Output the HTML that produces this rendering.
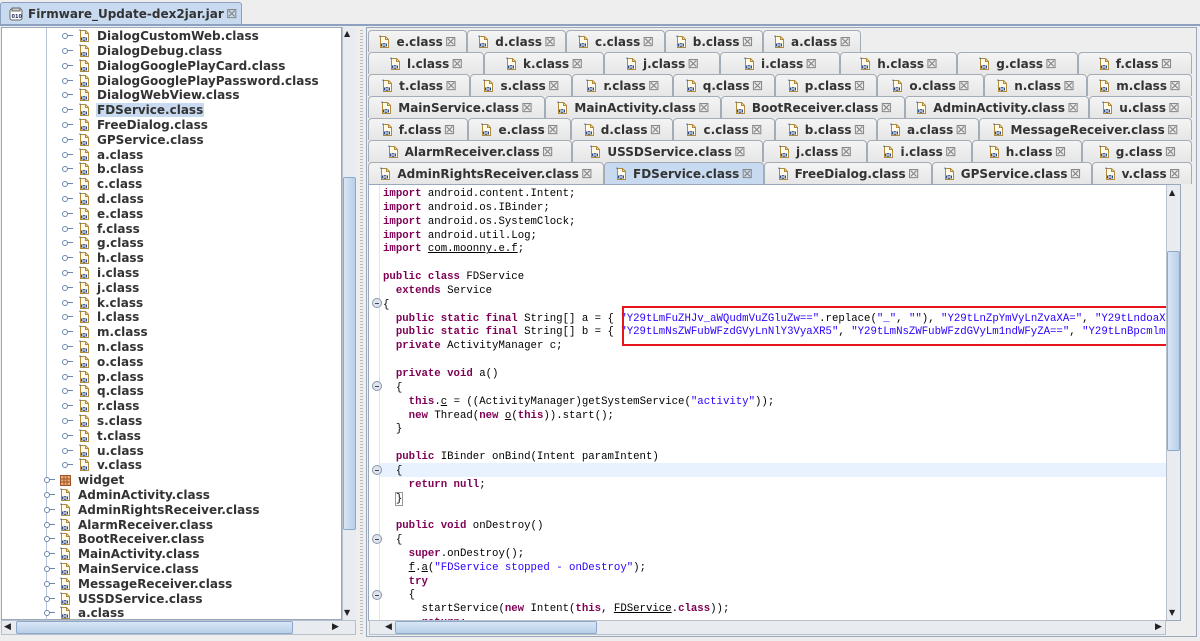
<!DOCTYPE html>
<html><head><meta charset="utf-8">
<style>
*{margin:0;padding:0;box-sizing:border-box}
body{width:1200px;height:641px;background:#eeeeee;position:relative;overflow:hidden;font-family:"DejaVu Sans","Liberation Sans",sans-serif}
.abs{position:absolute}
#toptab{left:0;top:2px;width:242px;height:23px;background:#c8daf0;border:1px solid #8da0c0;border-bottom:none;border-radius:3px 3px 0 0;font-size:12px;font-weight:bold;color:#333;display:flex;align-items:center;padding-left:8px;white-space:nowrap;overflow:hidden}
#topline{left:0;top:24px;width:1200px;height:2px;background:#8da0c0}
#tree{left:1px;top:27px;width:341px;height:593px;background:#fff;border:1px solid #9aa8bc}
.row{position:absolute;height:15px;font-size:12px;font-weight:bold;color:#333;display:flex;align-items:center;white-space:nowrap}
.row.sel span{background:#c8daf0}
.row span{padding:0 1px}
.con{position:absolute;width:10px;height:1px;background:#6b88b0}
.con:before{content:"";position:absolute;left:-1px;top:-2px;width:4px;height:4px;border:1px solid #6b88b0;border-radius:50%;background:#fff}
.ic{display:inline-block;width:13px;height:14px;margin-right:5px;vertical-align:middle}
.vs{background:#e8ebef;border-left:1px solid #b8c0cc}
.thumb{position:absolute;background:linear-gradient(90deg,#d8e6f6,#b8cfe9);border:1px solid #8ea8c8;border-radius:2px}
.t{position:absolute;height:22px;background:linear-gradient(#f4f4f4,#e6e6e6);border:1px solid #a4acb8;border-bottom:none;border-radius:4px 4px 0 0;font-size:12px;font-weight:bold;color:#333;display:flex;align-items:center;justify-content:center;white-space:nowrap}
.t.sel{background:#c8daf0}
.x{color:#888;font-weight:normal;font-size:14px;margin-left:2px;line-height:14px}
#editor{left:368px;top:184px;width:813px;height:437px;background:#fff;border:1px solid #9aa8bc}
pre{position:absolute;left:14px;top:0;font-family:"Liberation Mono","DejaVu Sans Mono",monospace;font-size:10.7px;line-height:13.85px;color:#000}
.k{color:#7f0055;font-weight:bold}
.s{color:#2a00ff}
.u{text-decoration:underline}
.fold{position:absolute;left:3px;width:10px;height:10px;border-radius:50%;background:#dde4ee;border:1px solid #8a98ac}
.fold:after{content:"";position:absolute;left:2px;top:3.5px;width:4px;height:1px;background:#445}
</style></head><body>
<svg width="0" height="0" style="position:absolute"><defs>
<symbol id="fi" viewBox="0 0 13 14"><path d="M2.5 1.5h5l3 3v8h-8z" fill="#fffbe8" stroke="#b08a3a"/><path d="M7.5 1.5v3h3" fill="none" stroke="#b08a3a"/><path d="M2 2v-1.5" stroke="#2a5ab0"/><rect x="3" y="8.5" width="1" height="3" fill="#2a4a90"/><rect x="5" y="8.5" width="2" height="3" fill="none" stroke="#2a4a90" stroke-width=".8"/><rect x="8" y="8.5" width="1" height="3" fill="#2a4a90"/></symbol>
<symbol id="pk" viewBox="0 0 13 14"><rect x="1.5" y="2.5" width="10" height="10" fill="#e8b070" stroke="#a0522d"/><path d="M1.5 6h10M1.5 9h10M5 2.5v10M8 2.5v10" stroke="#a0522d"/></symbol>
</defs></svg>

<div id="toptab" class="abs"><svg class="ic" style="width:14px;height:14px"><rect x="1" y="2" width="12" height="11" rx="2" fill="#fff" stroke="#666"/><rect x="3" y="1" width="8" height="3" fill="#ccc" stroke="#666"/><text x="2.5" y="11" font-size="5" fill="#236">010</text></svg>Firmware_Update-dex2jar.jar<span class="x">⊠</span></div>
<div id="topline" class="abs"></div>

<div id="tree" class="abs">
<div class="abs" style="left:44px;top:0;width:1px;height:593px;background:#b8c4d4"></div>
</div>
<div class="abs" id="rows" style="left:1px;top:27px;width:341px;height:593px;overflow:hidden">
<div class="con" style="left:62px;top:8px"></div><div class="row" style="left:77px;top:1px"><svg class="ic"><use href="#fi"/></svg><span>DialogCustomWeb.class</span></div>
<div class="con" style="left:62px;top:23px"></div><div class="row" style="left:77px;top:16px"><svg class="ic"><use href="#fi"/></svg><span>DialogDebug.class</span></div>
<div class="con" style="left:62px;top:38px"></div><div class="row" style="left:77px;top:31px"><svg class="ic"><use href="#fi"/></svg><span>DialogGooglePlayCard.class</span></div>
<div class="con" style="left:62px;top:53px"></div><div class="row" style="left:77px;top:46px"><svg class="ic"><use href="#fi"/></svg><span>DialogGooglePlayPassword.class</span></div>
<div class="con" style="left:62px;top:67px"></div><div class="row" style="left:77px;top:60px"><svg class="ic"><use href="#fi"/></svg><span>DialogWebView.class</span></div>
<div class="con" style="left:62px;top:82px"></div><div class="row sel" style="left:77px;top:75px"><svg class="ic"><use href="#fi"/></svg><span>FDService.class</span></div>
<div class="con" style="left:62px;top:97px"></div><div class="row" style="left:77px;top:90px"><svg class="ic"><use href="#fi"/></svg><span>FreeDialog.class</span></div>
<div class="con" style="left:62px;top:112px"></div><div class="row" style="left:77px;top:105px"><svg class="ic"><use href="#fi"/></svg><span>GPService.class</span></div>
<div class="con" style="left:62px;top:127px"></div><div class="row" style="left:77px;top:120px"><svg class="ic"><use href="#fi"/></svg><span>a.class</span></div>
<div class="con" style="left:62px;top:141px"></div><div class="row" style="left:77px;top:134px"><svg class="ic"><use href="#fi"/></svg><span>b.class</span></div>
<div class="con" style="left:62px;top:156px"></div><div class="row" style="left:77px;top:149px"><svg class="ic"><use href="#fi"/></svg><span>c.class</span></div>
<div class="con" style="left:62px;top:171px"></div><div class="row" style="left:77px;top:164px"><svg class="ic"><use href="#fi"/></svg><span>d.class</span></div>
<div class="con" style="left:62px;top:186px"></div><div class="row" style="left:77px;top:179px"><svg class="ic"><use href="#fi"/></svg><span>e.class</span></div>
<div class="con" style="left:62px;top:201px"></div><div class="row" style="left:77px;top:194px"><svg class="ic"><use href="#fi"/></svg><span>f.class</span></div>
<div class="con" style="left:62px;top:215px"></div><div class="row" style="left:77px;top:208px"><svg class="ic"><use href="#fi"/></svg><span>g.class</span></div>
<div class="con" style="left:62px;top:230px"></div><div class="row" style="left:77px;top:223px"><svg class="ic"><use href="#fi"/></svg><span>h.class</span></div>
<div class="con" style="left:62px;top:245px"></div><div class="row" style="left:77px;top:238px"><svg class="ic"><use href="#fi"/></svg><span>i.class</span></div>
<div class="con" style="left:62px;top:260px"></div><div class="row" style="left:77px;top:253px"><svg class="ic"><use href="#fi"/></svg><span>j.class</span></div>
<div class="con" style="left:62px;top:275px"></div><div class="row" style="left:77px;top:268px"><svg class="ic"><use href="#fi"/></svg><span>k.class</span></div>
<div class="con" style="left:62px;top:289px"></div><div class="row" style="left:77px;top:282px"><svg class="ic"><use href="#fi"/></svg><span>l.class</span></div>
<div class="con" style="left:62px;top:304px"></div><div class="row" style="left:77px;top:297px"><svg class="ic"><use href="#fi"/></svg><span>m.class</span></div>
<div class="con" style="left:62px;top:319px"></div><div class="row" style="left:77px;top:312px"><svg class="ic"><use href="#fi"/></svg><span>n.class</span></div>
<div class="con" style="left:62px;top:334px"></div><div class="row" style="left:77px;top:327px"><svg class="ic"><use href="#fi"/></svg><span>o.class</span></div>
<div class="con" style="left:62px;top:349px"></div><div class="row" style="left:77px;top:342px"><svg class="ic"><use href="#fi"/></svg><span>p.class</span></div>
<div class="con" style="left:62px;top:363px"></div><div class="row" style="left:77px;top:356px"><svg class="ic"><use href="#fi"/></svg><span>q.class</span></div>
<div class="con" style="left:62px;top:378px"></div><div class="row" style="left:77px;top:371px"><svg class="ic"><use href="#fi"/></svg><span>r.class</span></div>
<div class="con" style="left:62px;top:393px"></div><div class="row" style="left:77px;top:386px"><svg class="ic"><use href="#fi"/></svg><span>s.class</span></div>
<div class="con" style="left:62px;top:408px"></div><div class="row" style="left:77px;top:401px"><svg class="ic"><use href="#fi"/></svg><span>t.class</span></div>
<div class="con" style="left:62px;top:423px"></div><div class="row" style="left:77px;top:416px"><svg class="ic"><use href="#fi"/></svg><span>u.class</span></div>
<div class="con" style="left:62px;top:437px"></div><div class="row" style="left:77px;top:430px"><svg class="ic"><use href="#fi"/></svg><span>v.class</span></div>
<div class="con" style="left:44px;top:452px"></div><div class="row" style="left:58px;top:445px"><svg class="ic"><use href="#pk"/></svg><span>widget</span></div>
<div class="con" style="left:44px;top:467px"></div><div class="row" style="left:58px;top:460px"><svg class="ic"><use href="#fi"/></svg><span>AdminActivity.class</span></div>
<div class="con" style="left:44px;top:482px"></div><div class="row" style="left:58px;top:475px"><svg class="ic"><use href="#fi"/></svg><span>AdminRightsReceiver.class</span></div>
<div class="con" style="left:44px;top:497px"></div><div class="row" style="left:58px;top:490px"><svg class="ic"><use href="#fi"/></svg><span>AlarmReceiver.class</span></div>
<div class="con" style="left:44px;top:511px"></div><div class="row" style="left:58px;top:504px"><svg class="ic"><use href="#fi"/></svg><span>BootReceiver.class</span></div>
<div class="con" style="left:44px;top:526px"></div><div class="row" style="left:58px;top:519px"><svg class="ic"><use href="#fi"/></svg><span>MainActivity.class</span></div>
<div class="con" style="left:44px;top:541px"></div><div class="row" style="left:58px;top:534px"><svg class="ic"><use href="#fi"/></svg><span>MainService.class</span></div>
<div class="con" style="left:44px;top:556px"></div><div class="row" style="left:58px;top:549px"><svg class="ic"><use href="#fi"/></svg><span>MessageReceiver.class</span></div>
<div class="con" style="left:44px;top:571px"></div><div class="row" style="left:58px;top:564px"><svg class="ic"><use href="#fi"/></svg><span>USSDService.class</span></div>
<div class="con" style="left:44px;top:585px"></div><div class="row" style="left:58px;top:578px"><svg class="ic"><use href="#fi"/></svg><span>a.class</span></div>
</div>
<!-- tree scrollbars -->
<div class="abs vs" style="left:342px;top:27px;width:14px;height:593px"></div>
<div class="abs" style="left:344px;top:29px;font-size:8px;color:#222">▲</div>
<div class="thumb" style="left:343px;top:177px;width:13px;height:353px"></div>
<div class="abs" style="left:344px;top:608px;font-size:8px;color:#222">▼</div>
<div class="abs" style="left:1px;top:620px;width:355px;height:15px;background:#e8ebef;border:1px solid #b8c0cc"></div>
<div class="abs" style="left:4px;top:622px;font-size:9px;color:#222">◀</div>
<div class="thumb" style="left:16px;top:621px;width:277px;height:13px;background:linear-gradient(#d8e6f6,#b8cfe9)"></div>
<div class="abs" style="left:332px;top:622px;font-size:9px;color:#222">▶</div>
<!-- splitter -->
<div class="abs" style="left:360px;top:30px;width:3px;height:604px;background:repeating-linear-gradient(#bbb 0 1px,#eee 1px 3px)"></div>
<div class="abs" style="left:366px;top:27px;width:831px;height:610px;border:1px solid #9aa8bc"></div>

<!-- tabs -->
<div class="t" style="left:368px;top:30px;width:99px"><svg class="ic"><use href="#fi"/></svg>e.class<span class="x">⊠</span></div>
<div class="t" style="left:467px;top:30px;width:99px"><svg class="ic"><use href="#fi"/></svg>d.class<span class="x">⊠</span></div>
<div class="t" style="left:566px;top:30px;width:99px"><svg class="ic"><use href="#fi"/></svg>c.class<span class="x">⊠</span></div>
<div class="t" style="left:665px;top:30px;width:98px"><svg class="ic"><use href="#fi"/></svg>b.class<span class="x">⊠</span></div>
<div class="t" style="left:763px;top:30px;width:98px"><svg class="ic"><use href="#fi"/></svg>a.class<span class="x">⊠</span></div>

<div class="t" style="left:368px;top:52px;width:116px"><svg class="ic"><use href="#fi"/></svg>l.class<span class="x">⊠</span></div>
<div class="t" style="left:484px;top:52px;width:120px"><svg class="ic"><use href="#fi"/></svg>k.class<span class="x">⊠</span></div>
<div class="t" style="left:604px;top:52px;width:116px"><svg class="ic"><use href="#fi"/></svg>j.class<span class="x">⊠</span></div>
<div class="t" style="left:720px;top:52px;width:120px"><svg class="ic"><use href="#fi"/></svg>i.class<span class="x">⊠</span></div>
<div class="t" style="left:840px;top:52px;width:117px"><svg class="ic"><use href="#fi"/></svg>h.class<span class="x">⊠</span></div>
<div class="t" style="left:957px;top:52px;width:121px"><svg class="ic"><use href="#fi"/></svg>g.class<span class="x">⊠</span></div>
<div class="t" style="left:1078px;top:52px;width:114px"><svg class="ic"><use href="#fi"/></svg>f.class<span class="x">⊠</span></div>

<div class="t" style="left:368px;top:74px;width:102px"><svg class="ic"><use href="#fi"/></svg>t.class<span class="x">⊠</span></div>
<div class="t" style="left:470px;top:74px;width:102px"><svg class="ic"><use href="#fi"/></svg>s.class<span class="x">⊠</span></div>
<div class="t" style="left:572px;top:74px;width:101px"><svg class="ic"><use href="#fi"/></svg>r.class<span class="x">⊠</span></div>
<div class="t" style="left:673px;top:74px;width:102px"><svg class="ic"><use href="#fi"/></svg>q.class<span class="x">⊠</span></div>
<div class="t" style="left:775px;top:74px;width:102px"><svg class="ic"><use href="#fi"/></svg>p.class<span class="x">⊠</span></div>
<div class="t" style="left:877px;top:74px;width:107px"><svg class="ic"><use href="#fi"/></svg>o.class<span class="x">⊠</span></div>
<div class="t" style="left:984px;top:74px;width:103px"><svg class="ic"><use href="#fi"/></svg>n.class<span class="x">⊠</span></div>
<div class="t" style="left:1087px;top:74px;width:105px"><svg class="ic"><use href="#fi"/></svg>m.class<span class="x">⊠</span></div>

<div class="t" style="left:368px;top:96px;width:177px"><svg class="ic"><use href="#fi"/></svg>MainService.class<span class="x">⊠</span></div>
<div class="t" style="left:545px;top:96px;width:176px"><svg class="ic"><use href="#fi"/></svg>MainActivity.class<span class="x">⊠</span></div>
<div class="t" style="left:721px;top:96px;width:184px"><svg class="ic"><use href="#fi"/></svg>BootReceiver.class<span class="x">⊠</span></div>
<div class="t" style="left:905px;top:96px;width:184px"><svg class="ic"><use href="#fi"/></svg>AdminActivity.class<span class="x">⊠</span></div>
<div class="t" style="left:1089px;top:96px;width:103px"><svg class="ic"><use href="#fi"/></svg>u.class<span class="x">⊠</span></div>

<div class="t" style="left:368px;top:118px;width:100px"><svg class="ic"><use href="#fi"/></svg>f.class<span class="x">⊠</span></div>
<div class="t" style="left:468px;top:118px;width:103px"><svg class="ic"><use href="#fi"/></svg>e.class<span class="x">⊠</span></div>
<div class="t" style="left:571px;top:118px;width:102px"><svg class="ic"><use href="#fi"/></svg>d.class<span class="x">⊠</span></div>
<div class="t" style="left:673px;top:118px;width:102px"><svg class="ic"><use href="#fi"/></svg>c.class<span class="x">⊠</span></div>
<div class="t" style="left:775px;top:118px;width:102px"><svg class="ic"><use href="#fi"/></svg>b.class<span class="x">⊠</span></div>
<div class="t" style="left:877px;top:118px;width:102px"><svg class="ic"><use href="#fi"/></svg>a.class<span class="x">⊠</span></div>
<div class="t" style="left:979px;top:118px;width:213px"><svg class="ic"><use href="#fi"/></svg>MessageReceiver.class<span class="x">⊠</span></div>

<div class="t" style="left:368px;top:140px;width:204px"><svg class="ic"><use href="#fi"/></svg>AlarmReceiver.class<span class="x">⊠</span></div>
<div class="t" style="left:572px;top:140px;width:191px"><svg class="ic"><use href="#fi"/></svg>USSDService.class<span class="x">⊠</span></div>
<div class="t" style="left:763px;top:140px;width:104px"><svg class="ic"><use href="#fi"/></svg>j.class<span class="x">⊠</span></div>
<div class="t" style="left:867px;top:140px;width:105px"><svg class="ic"><use href="#fi"/></svg>i.class<span class="x">⊠</span></div>
<div class="t" style="left:972px;top:140px;width:110px"><svg class="ic"><use href="#fi"/></svg>h.class<span class="x">⊠</span></div>
<div class="t" style="left:1082px;top:140px;width:110px"><svg class="ic"><use href="#fi"/></svg>g.class<span class="x">⊠</span></div>

<div class="t" style="left:368px;top:162px;width:236px"><svg class="ic"><use href="#fi"/></svg>AdminRightsReceiver.class<span class="x">⊠</span></div>
<div class="t sel" style="left:604px;top:162px;width:160px;height:23px"><svg class="ic"><use href="#fi"/></svg>FDService.class<span class="x">⊠</span></div>
<div class="t" style="left:764px;top:162px;width:168px"><svg class="ic"><use href="#fi"/></svg>FreeDialog.class<span class="x">⊠</span></div>
<div class="t" style="left:932px;top:162px;width:160px"><svg class="ic"><use href="#fi"/></svg>GPService.class<span class="x">⊠</span></div>
<div class="t" style="left:1092px;top:162px;width:100px"><svg class="ic"><use href="#fi"/></svg>v.class<span class="x">⊠</span></div>

<!-- editor -->
<div id="editor" class="abs" style="overflow:hidden">
<div class="abs" style="left:10px;top:0;width:1px;height:437px;background:#e4e4e4"></div>
<div class="abs" style="left:11px;top:278px;width:787px;height:14px;background:#e8f2fe"></div>
<div class="fold" style="top:113px"></div>
<div class="fold" style="top:196px"></div>
<div class="fold" style="top:280px"></div>
<div class="fold" style="top:349px"></div>
<div class="fold" style="top:405px"></div>
<pre style="top:3px"><span class="k">import</span> android.content.Intent;
<span class="k">import</span> android.os.IBinder;
<span class="k">import</span> android.os.SystemClock;
<span class="k">import</span> android.util.Log;
<span class="k">import</span> <span class="u">com.moonny.e.f</span>;

<span class="k">public class</span> FDService
  <span class="k">extends</span> Service
{
  <span class="k">public static final</span> String[] a = { <span class="s">"Y29tLmFuZHJv_aWQudmVuZGluZw=="</span>.replace(<span class="s">"_"</span>, <span class="s">""</span>), <span class="s">"Y29tLnZpYmVyLnZvaXA="</span>, <span class="s">"Y29tLndoaXNwZXI="</span>
  <span class="k">public static final</span> String[] b = { <span class="s">"Y29tLmNsZWFubWFzdGVyLnNlY3VyaXR5"</span>, <span class="s">"Y29tLmNsZWFubWFzdGVyLm1ndWFyZA=="</span>, <span class="s">"Y29tLnBpcmlmb3JtLmNj"</span>
  <span class="k">private</span> ActivityManager c;

  <span class="k">private void</span> a()
  {
    <span class="k">this</span>.<span class="u">c</span> = ((ActivityManager)getSystemService(<span class="s">"activity"</span>));
    <span class="k">new</span> Thread(<span class="k">new</span> <span class="u">o</span>(<span class="k">this</span>)).start();
  }

  <span class="k">public</span> IBinder onBind(Intent paramIntent)
  {
    <span class="k">return null</span>;
  <span style="outline:1px solid #999">}</span>

  <span class="k">public void</span> onDestroy()
  {
    <span class="k">super</span>.onDestroy();
    <span class="u">f</span>.<span class="u">a</span>(<span class="s">"FDService stopped - onDestroy"</span>);
    <span class="k">try</span>
    {
      startService(<span class="k">new</span> Intent(<span class="k">this</span>, <span class="u">FDService</span>.<span class="k">class</span>));
      <span class="k">return</span>;</pre>
<div class="abs" style="left:253px;top:121px;width:546px;height:40px;border:2.5px solid #e8141c"></div>
<div class="abs vs" style="left:797px;top:0;width:15px;height:436px"></div>
<div class="abs" style="left:800px;top:3px;font-size:8px;color:#222">▲</div>
<div class="thumb" style="left:798px;top:66px;width:13px;height:200px"></div>
<div class="abs" style="left:800px;top:423px;font-size:8px;color:#222">▼</div>
</div>
<div class="abs" style="left:369px;top:620px;width:797px;height:15px;background:#e8ebef;border:1px solid #b8c0cc"></div>
<div class="abs" style="left:385px;top:622px;font-size:9px;color:#222">◀</div>
<div class="thumb" style="left:395px;top:621px;width:202px;height:13px;background:linear-gradient(#d8e6f6,#b8cfe9)"></div>
<div class="abs" style="left:1155px;top:622px;font-size:9px;color:#222">▶</div>
</body></html>
